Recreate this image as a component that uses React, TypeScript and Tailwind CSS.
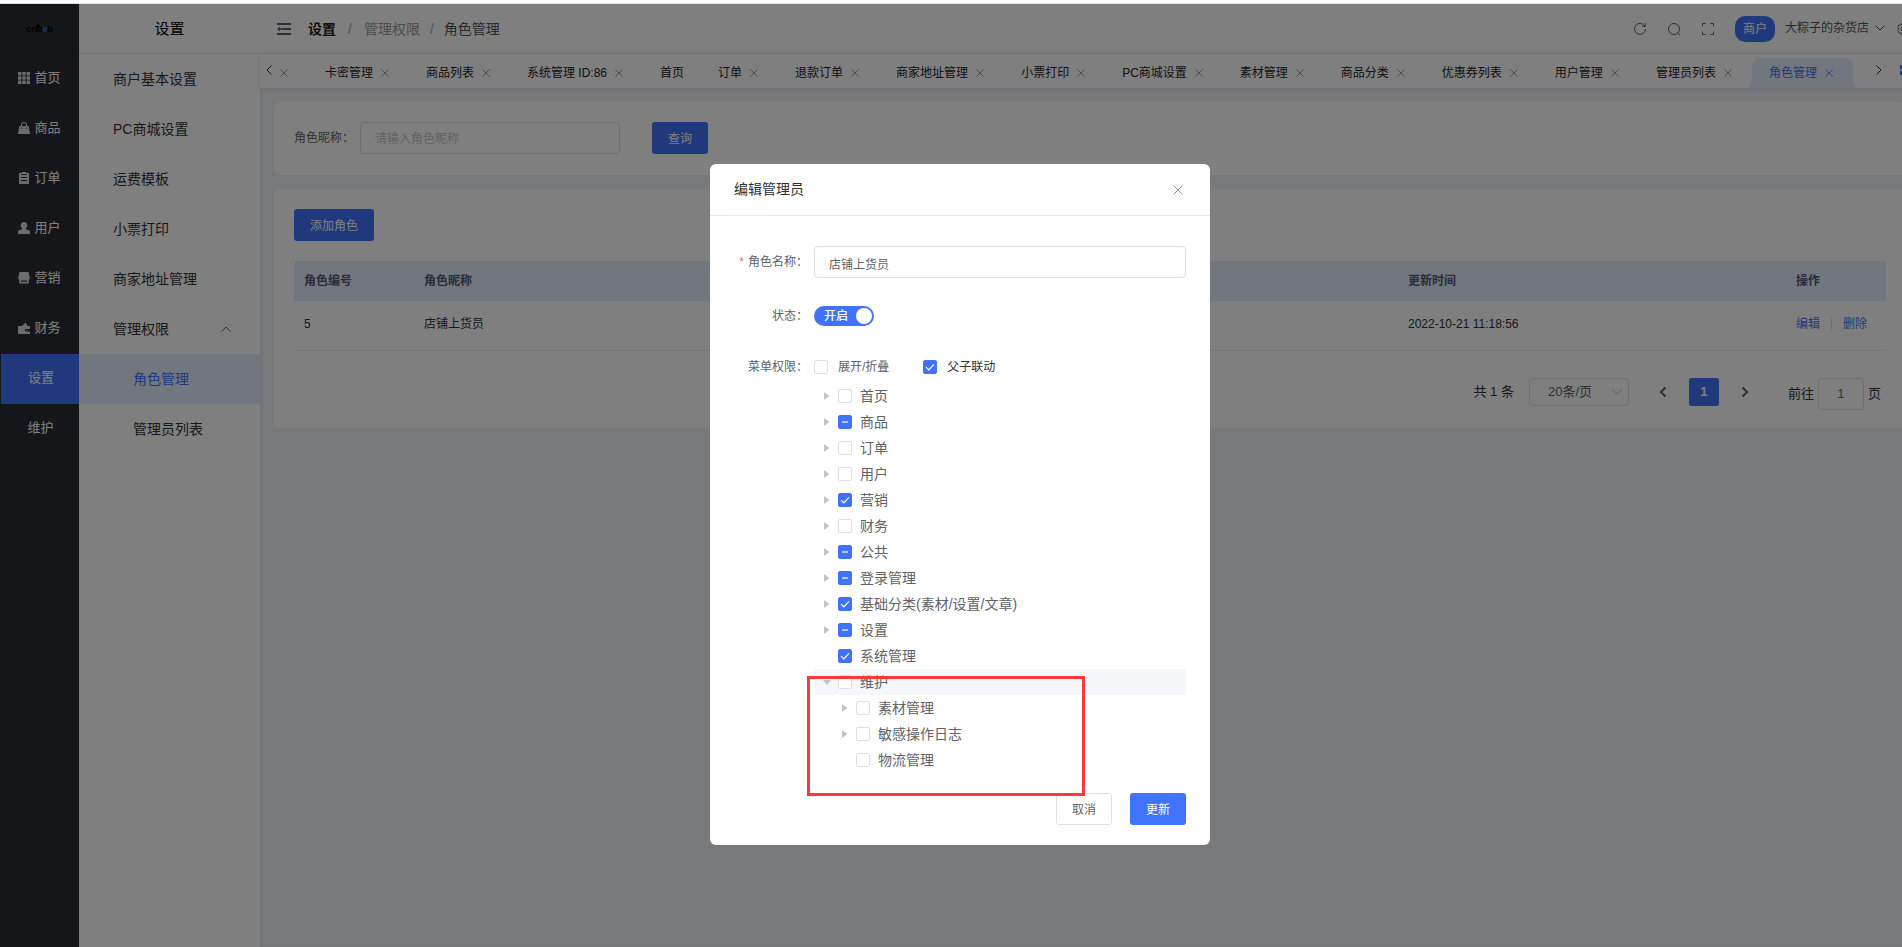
import { useEffect, useRef, useState } from 'react';
import type { ReactNode } from 'react';
import clsx from 'clsx';

type CheckState = 'none' | 'half' | 'all';

interface TreeNode {
  label: string;
  state: CheckState;
  level?: number;
  arrow?: 'right' | 'down';
  active?: boolean;
}

const sideMenu: { label: string; icon?: ReactNode }[] = [
  {
    label: '首页',
    icon: <path d="M0 0h3.4v3.4H0zM4.3 0h3.4v3.4H4.3zM8.6 0H12v3.4H8.6zM0 4.3h3.4v3.4H0zM4.3 4.3h3.4v3.4H4.3zM8.6 4.3H12v3.4H8.6zM0 8.6h3.4V12H0zM4.3 8.6h3.4V12H4.3zM8.6 8.6H12V12H8.6z" />,
  },
  {
    label: '商品',
    icon: (
      <path
        fillRule="evenodd"
        d="M3 4V3a3 3 0 0 1 6 0v1h1.6L12 12H0l1.4-8zM4 4h4V3a2 2 0 0 0-4 0zM3.4 5.6v1.2h1V5.6zM7.6 5.6v1.2h1V5.6z"
      />
    ),
  },
  {
    label: '订单',
    icon: <path fillRule="evenodd" d="M4 0h4v1h3v11H1V1h3zM3.4 2v1h5.2V2zM3 5v1h6V5zM3 8v1h6V8z" />,
  },
  {
    label: '用户',
    icon: <path d="M6 0a3.200 3.200 0 0 1 1.800 5.900V7L12 8.800V12H0V8.800L4.200 7V5.900A3.200 3.200 0 0 1 6 0z" />,
  },
  {
    label: '营销',
    icon: <path fillRule="evenodd" d="M1.500 0h9L12 7h-1.200v4.500H1.200V7H0zM3 8.600v1.200h6V8.600z" />,
  },
  {
    label: '财务',
    icon: <path fillRule="evenodd" d="M0 4h4l3.600-3.500L9.500 4H12v3H8.200a1.300 1.300 0 0 0 0 2.600H12V12H0zM8.500 7.800h1.200v1H8.500z" />,
  },
  { label: '设置' },
  { label: '维护' },
];

const subMenu = ['商户基本设置', 'PC商城设置', '运费模板', '小票打印', '商家地址管理'];

const tabs = [
  '卡密管理',
  '商品列表',
  '系统管理 ID:86',
  '首页',
  '订单',
  '退款订单',
  '商家地址管理',
  '小票打印',
  'PC商城设置',
  '素材管理',
  '商品分类',
  '优惠券列表',
  '用户管理',
  '管理员列表',
  '角色管理',
];

const tree: TreeNode[] = [
  { label: '首页', state: 'none', arrow: 'right' },
  { label: '商品', state: 'half', arrow: 'right' },
  { label: '订单', state: 'none', arrow: 'right' },
  { label: '用户', state: 'none', arrow: 'right' },
  { label: '营销', state: 'all', arrow: 'right' },
  { label: '财务', state: 'none', arrow: 'right' },
  { label: '公共', state: 'half', arrow: 'right' },
  { label: '登录管理', state: 'half', arrow: 'right' },
  { label: '基础分类(素材/设置/文章)', state: 'all', arrow: 'right' },
  { label: '设置', state: 'half', arrow: 'right' },
  { label: '系统管理', state: 'all' },
  { label: '维护', state: 'none', arrow: 'down', active: true },
  { label: '素材管理', state: 'none', arrow: 'right', level: 1 },
  { label: '敏感操作日志', state: 'none', arrow: 'right', level: 1 },
  { label: '物流管理', state: 'none', level: 1 },
];

const Cross = ({ className }: { className?: string }) => (
  <svg viewBox="0 0 10 10" className={className} fill="none" stroke="currentColor" strokeWidth="1">
    <path d="M.5.5l9 9M9.500.5l-9 9" />
  </svg>
);

const Chevron = ({ dir, className }: { dir: 'left' | 'right' | 'up' | 'down'; className?: string }) => {
  const paths = {
    left: 'M7.500 1.500L3 6l4.500 4.500',
    right: 'M4.500 1.500L9 6l-4.500 4.500',
    up: 'M1.500 8.500L6 4l4.500 4.500',
    down: 'M1.500 3.500L6 8l4.500-4.500',
  };
  return (
    <svg viewBox="0 0 12 12" className={clsx('h-3 w-3', className)} fill="none" stroke="currentColor">
      <path d={paths[dir]} />
    </svg>
  );
};

const Checkbox = ({ id, initial }: { id: string; initial: CheckState }) => {
  const [state, setState] = useState<CheckState>(initial);
  const ref = useRef<HTMLInputElement>(null);

  useEffect(() => {
    if (ref.current) ref.current.indeterminate = state === 'half';
  }, [state]);

  return (
    <span className="grid h-3.5 w-3.5 shrink-0">
      <input
        ref={ref}
        id={id}
        type="checkbox"
        checked={state === 'all'}
        onChange={() => setState(state === 'all' ? 'none' : 'all')}
        className={clsx(
          'col-start-1 row-start-1 h-3.5 w-3.5 appearance-none rounded-xs border',
          state === 'none' ? 'border-[#dcdfe6] bg-white' : 'border-[#4073fa] bg-[#4073fa]',
        )}
      />
      {state !== 'none' && (
        <svg viewBox="0 0 14 14" className="pointer-events-none col-start-1 row-start-1" fill="none" stroke="#fff">
          {state === 'all' ? <path d="M3 7.200l2.800 2.800L11 4.300" strokeWidth="1.200" /> : <path d="M4 7h6" strokeWidth="2" strokeOpacity=".6" />}
        </svg>
      )}
    </span>
  );
};

const Sidebar = () => (
  <aside className="flex w-[79px] shrink-0 flex-col bg-[#2a2c34]">
    <div className="flex h-[50px] items-center justify-center text-[9px] leading-none font-bold text-black">
      <span className="relative">
        crm<span className="text-[#2d7df0]">e</span>b
        <span className="absolute -top-px left-2.5 h-1 w-1 rounded-full bg-black" />
      </span>
    </div>
    <nav className="flex flex-col">
      {sideMenu.map((item) => (
        <a
          key={item.label}
          href="#"
          className={clsx(
            'flex h-[50px] items-center justify-center gap-1 pb-0.5 text-[13px] text-white',
            !item.icon && 'pl-0.5',
            item.label === '设置' && 'border-l border-[#2a2c34] bg-[#4073fa]',
          )}
        >
          {item.icon && (
            <svg viewBox="0 0 12 12" className="h-3 w-3" fill="#d8d8d8">
              {item.icon}
            </svg>
          )}
          {item.label}
        </a>
      ))}
    </nav>
  </aside>
);

const SubMenu = () => (
  <aside className="flex w-[181px] shrink-0 flex-col bg-white text-sm text-[#303133]">
    <h2 className="flex h-[50px] items-center justify-center border-b border-[#e4e5e7] text-[15px] text-black">设置</h2>
    <nav className="flex flex-col">
      {subMenu.map((label) => (
        <a key={label} href="#" className="flex h-[50px] items-center pl-[34px]">
          {label}
        </a>
      ))}
      <a href="#" className="flex h-[50px] items-center justify-between pr-7 pl-[34px]">
        管理权限
        <Chevron dir="up" className="text-[#606266]" />
      </a>
      <a href="#" className="flex h-[50px] items-center bg-[#e4ecff] pl-[54px] text-[#4073fa]">
        角色管理
      </a>
      <a href="#" className="flex h-[50px] items-center pl-[54px]">
        管理员列表
      </a>
    </nav>
  </aside>
);

const Header = () => (
  <header className="flex h-[50px] items-center justify-between border-b border-[#e4e5e7] bg-white pr-2.5 pl-[17px]">
    <div className="flex items-center">
      <button type="button" aria-label="收起菜单" className="mr-[17px]">
        <svg viewBox="0 0 14 12" className="h-3 w-3.5" fill="#5c6072">
          <path d="M0 0h14v2H0zM5 5h9v2H5zM0 10h14v2H0zM0 6l3-2.500V5h1.500v2H3v1.500z" />
        </svg>
      </button>
      <nav className="flex items-center text-sm">
        <a href="#" className="font-bold text-[#1f2023]">
          设置
        </a>
        <span className="mx-3 text-[#a0a4ad]">/</span>
        <a href="#" className="text-[#97999f]">
          管理权限
        </a>
        <span className="mx-2.5 text-[#a0a4ad]">/</span>
        <span className="text-[#515357]">角色管理</span>
      </nav>
    </div>
    <div className="flex items-center text-xs text-[#515a6e]">
      <button type="button" aria-label="刷新">
        <svg viewBox="0 0 14 14" className="h-3.5 w-3.5" fill="none" stroke="#606266">
          <path d="M11.800 4.200A5.500 5.500 0 1 0 12.500 7M12.300 1.300v3.200H9.100" />
        </svg>
      </button>
      <button type="button" aria-label="搜索" className="ml-5">
        <svg viewBox="0 0 14 14" className="h-3.5 w-3.5" fill="none" stroke="#606266">
          <circle cx="7" cy="7" r="5.500" />
          <path d="M10.500 11l2.500 2.300" />
        </svg>
      </button>
      <button type="button" aria-label="全屏" className="ml-5">
        <svg viewBox="0 0 14 14" className="h-3.5 w-3.5" fill="none" stroke="#606266">
          <path d="M1.500 4.500v-3h3M9.500 1.500h3v3M12.500 9.500v3h-3M4.500 12.500h-3v-3" />
        </svg>
      </button>
      <span className="ml-5 flex h-[26px] w-10 items-center justify-center rounded-[10px] bg-[#4073fa] text-white">商户</span>
      <button type="button" className="ml-2.5 flex items-center gap-[5px] pb-0.5 text-[#515357]">
        大粽子的杂货店
        <Chevron dir="down" />
      </button>
      <button type="button" aria-label="设置" className="ml-2.5">
        <svg viewBox="0 0 14 14" className="h-3.5 w-3.5" fill="none" stroke="#606266">
          <path d="M5.500 1.500h3l.6 1.800 1.800-.4 1.500 2.600L11.200 7l1.200 1.500-1.500 2.600-1.800-.4-.6 1.800h-3l-.6-1.800-1.800.4-1.500-2.600L2.800 7 1.600 5.500l1.500-2.600 1.800.4z" />
          <circle cx="7" cy="7" r="2" />
        </svg>
      </button>
    </div>
  </header>
);

const TabBar = () => (
  <div className="relative flex h-[34px] items-center bg-white shadow-[0_1px_6px_rgba(60,60,140,0.12)]">
    <button type="button" aria-label="向左滚动" className="ml-1 shrink-0 pb-0.5 text-[#303133]">
      <Chevron dir="left" />
    </button>
    <div className="flex h-full min-w-0 flex-1 items-end overflow-hidden text-xs text-[#1f2023]">
      <div className="flex h-[30px] shrink-0 items-center pr-5">
        <button type="button" aria-label="关闭标签" className="pl-1 text-[#808085]">
          <Cross className="h-2 w-2" />
        </button>
      </div>
      {tabs.map((label) => {
        const active = label === '角色管理';
        return (
          <div
            key={label}
            className={clsx(
              'relative flex h-[30px] shrink-0 items-center px-[17px]',
              active && 'rounded-t-lg bg-[#e4ecff] text-[#4073fa]',
            )}
          >
            {active && (
              <>
                <svg viewBox="0 0 4 10" className="absolute bottom-0 -left-1 h-2.5 w-1" fill="#e4ecff">
                  <path d="M4 0v10H0Q3 8 4 0z" />
                </svg>
                <svg viewBox="0 0 4 10" className="absolute -right-1 bottom-0 h-2.5 w-1" fill="#e4ecff">
                  <path d="M0 0v10h4Q1 8 0 0z" />
                </svg>
              </>
            )}
            <a href="#">{label}</a>
            {label !== '首页' && (
              <button
                type="button"
                aria-label={`关闭${label}`}
                className={clsx('ml-2 pr-[3px]', active ? 'text-[#4073fa]' : 'text-[#808085]')}
              >
                <Cross className="h-2 w-2" />
              </button>
            )}
          </div>
        );
      })}
    </div>
    <button type="button" aria-label="向右滚动" className="mr-4 shrink-0 pb-0.5 text-[#303133]">
      <Chevron dir="right" />
    </button>
    <button type="button" aria-label="标签操作" className="mr-2.5 shrink-0 pb-0.5">
      <svg viewBox="0 0 10 10" className="h-2.5 w-2.5" fill="#4073fa">
        <path d="M0 0h4.200v4.200H0zM5.800 0H10v4.200H5.800zM0 5.800h4.200V10H0zM5.800 5.800H10V10H5.800z" />
      </svg>
    </button>
  </div>
);

const Content = () => (
  <main className="flex flex-col gap-3.5 p-3.5">
    <form className="flex items-center rounded-md bg-white px-5 pt-5 pb-[21px] text-xs">
      <label htmlFor="nickname" className="mr-1.5 text-[#606266]">
        角色昵称：
      </label>
      <input
        id="nickname"
        placeholder="请输入角色昵称"
        className="h-8 w-[260px] rounded-sm border border-[#dcdfe6] bg-white px-3.5 pt-0.5 placeholder:text-[#c0c4cc]"
      />
      <button type="button" className="ml-8 h-8 w-14 rounded-[3px] bg-[#4073fa] pt-0.5 text-white">
        查询
      </button>
    </form>

    <section className="rounded-md bg-white px-5 pt-5 pb-[18px]">
      <button type="button" className="block h-8 w-20 rounded-[3px] bg-[#4073fa] pt-0.5 text-xs text-white">
        添加角色
      </button>
      <table className="mt-5 w-full table-fixed text-left text-xs text-[#303133]">
        <thead>
          <tr className="h-10 bg-[#e4ecff] text-[#515a6e]">
            <th className="w-[120px] rounded-tl px-2.5">角色编号</th>
            <th className="px-2.5">角色昵称</th>
            <th className="w-[388px] px-2.5">更新时间</th>
            <th className="w-[100px] px-2.5">操作</th>
          </tr>
        </thead>
        <tbody>
          <tr className="h-[49px] border-b border-[#e8eaec]">
            <td className="px-2.5 pb-0.5">5</td>
            <td className="px-2.5 pb-0.5">店铺上货员</td>
            <td className="px-2.5 pb-0.5">2022-10-21 11:18:56</td>
            <td className="px-2.5 pb-0.5">
              <div className="flex items-center text-[#4073fa]">
                <a href="#">编辑</a>
                <span className="mx-[11px] h-3 w-px bg-[#dcdee2]" />
                <a href="#">删除</a>
              </div>
            </td>
          </tr>
        </tbody>
      </table>

      <div className="mt-[27px] flex items-start justify-end pr-[5px] text-[13px] text-[#303133]">
        <span className="leading-7">共 1 条</span>
        <div className="ml-[15px] grid h-7 w-[100px] items-center">
          <select
            aria-label="每页条数"
            className="col-start-1 row-start-1 h-7 w-full appearance-none rounded-sm border border-[#dcdfe6] bg-white pl-[18px] text-[#606266]"
          >
            <option>20条/页</option>
          </select>
          <Chevron dir="down" className="pointer-events-none col-start-1 row-start-1 mr-1.5 justify-self-end text-[#c0c4cc]" />
        </div>
        <button type="button" aria-label="上一页" className="ml-5 flex h-7 w-[30px] items-center justify-center">
          <Chevron dir="left" className="stroke-2 text-[#606266]" />
        </button>
        <button type="button" className="ml-2.5 h-7 w-[30px] rounded-xs bg-[#4073fa] font-bold text-white">
          1
        </button>
        <button type="button" aria-label="下一页" className="ml-2.5 flex h-7 w-[30px] items-center justify-center">
          <Chevron dir="right" className="stroke-2 text-[#606266]" />
        </button>
        <label htmlFor="page" className="ml-[29px] leading-8">
          前往
        </label>
        <input
          id="page"
          defaultValue="1"
          className="mx-1 h-8 w-[46px] rounded-sm border border-[#dcdfe6] bg-white text-center text-[#606266]"
        />
        <span className="leading-8">页</span>
      </div>
    </section>
  </main>
);

const PermissionTree = () => (
  <ul className="text-sm text-[#606266]">
    {tree.map((node, index) => (
      <li
        key={index}
        className={clsx('flex h-[26px] items-center', node.level ? 'pl-[27px]' : 'pl-[9px]', node.active && 'bg-[#f5f7fa]')}
      >
        <svg viewBox="0 0 8 8" className="mr-[7px] h-2 w-2 shrink-0" fill="#c0c4cc">
          {node.arrow === 'right' && <path d="M1 0l5.500 4L1 8z" />}
          {node.arrow === 'down' && <path d="M0 2h8L4 7z" />}
        </svg>
        <Checkbox id={`node-${index}`} initial={node.state} />
        <label htmlFor={`node-${index}`} className="ml-2">
          {node.label}
        </label>
      </li>
    ))}
  </ul>
);

const EditDialog = () => {
  const [enabled, setEnabled] = useState(true);

  return (
    <div role="dialog" aria-label="编辑管理员" className="relative w-[500px] rounded-md bg-white">
      <div className="flex h-[52px] items-center justify-between border-b border-[#e8eaec] px-6">
        <h3 className="pb-0.5 text-sm text-[#303133]">编辑管理员</h3>
        <button type="button" aria-label="关闭" className="pr-[3px] text-[#909399]">
          <Cross className="h-2.5 w-2.5" />
        </button>
      </div>

      <form className="grid grid-cols-[74px_1fr] gap-x-1.5 px-6 pt-[30px] pb-5 text-xs text-[#606266]">
        <label htmlFor="role-name" className="text-right leading-8">
          <span className="mr-1 text-[#f56c6c]">*</span>
          角色名称：
        </label>
        <input
          id="role-name"
          defaultValue="店铺上货员"
          className="h-8 rounded-sm border border-[#dcdfe6] bg-white px-3.5 pt-0.5 text-[#606266]"
        />

        <label htmlFor="status" className="mt-[22px] text-right leading-8">
          状态：
        </label>
        <div className="mt-7 grid h-5 w-[60px] items-center">
          <input
            id="status"
            type="checkbox"
            role="switch"
            checked={enabled}
            onChange={() => setEnabled(!enabled)}
            className={clsx(
              'col-start-1 row-start-1 h-5 w-full appearance-none rounded-full',
              enabled ? 'bg-[#4073fa]' : 'bg-[#dcdfe6]',
            )}
          />
          <span
            className={clsx(
              'pointer-events-none col-start-1 row-start-1 flex items-center justify-between pr-0.5 pl-2.5 font-medium text-white',
              !enabled && 'flex-row-reverse',
            )}
          >
            {enabled ? '开启' : '关闭'}
            <span className="h-4 w-4 rounded-full bg-white" />
          </span>
        </div>

        <span className="mt-[19px] text-right leading-8">菜单权限：</span>
        <div className="mt-[19px]">
          <div className="flex h-8 items-center">
            <Checkbox id="expand" initial="none" />
            <label htmlFor="expand" className="ml-2.5">
              展开/折叠
            </label>
            <span className="w-[34px]" />
            <Checkbox id="linkage" initial="all" />
            <label htmlFor="linkage" className="ml-2.5 text-[#303133]">
              父子联动
            </label>
          </div>
          <PermissionTree />
        </div>

        <div className="col-span-2 mt-5 flex justify-end gap-[18px]">
          <button type="button" className="h-8 w-14 rounded-[3px] border border-[#dcdfe6] bg-white pt-0.5">
            取消
          </button>
          <button type="button" className="h-8 w-14 rounded-[3px] bg-[#4073fa] pt-0.5 text-white">
            更新
          </button>
        </div>
      </form>

      {/* highlight frame over the maintenance branch */}
      <div className="pointer-events-none absolute top-[512px] left-[97px] h-[120px] w-[278px] border-3 border-[#ff3838]" />
    </div>
  );
};

export default function App() {
  return (
    <div className="flex min-h-screen flex-col overflow-hidden bg-white font-['Liberation_Sans','Noto_Sans_CJK_SC',sans-serif]">
      <div className="h-1 shrink-0 border-b border-[#dcdcdc]" />
      <div className="relative -mr-[18px] flex flex-1">
        <Sidebar />
        <SubMenu />
        <div className="flex min-w-0 flex-1 flex-col bg-[#f0f2f5] shadow-[inset_2px_0_3px_rgba(0,21,41,0.06)]">
          <Header />
          <TabBar />
          <Content />
        </div>
        <div className="absolute inset-0 flex items-start justify-center bg-black/50 pt-40">
          <EditDialog />
        </div>
      </div>
    </div>
  );
}
